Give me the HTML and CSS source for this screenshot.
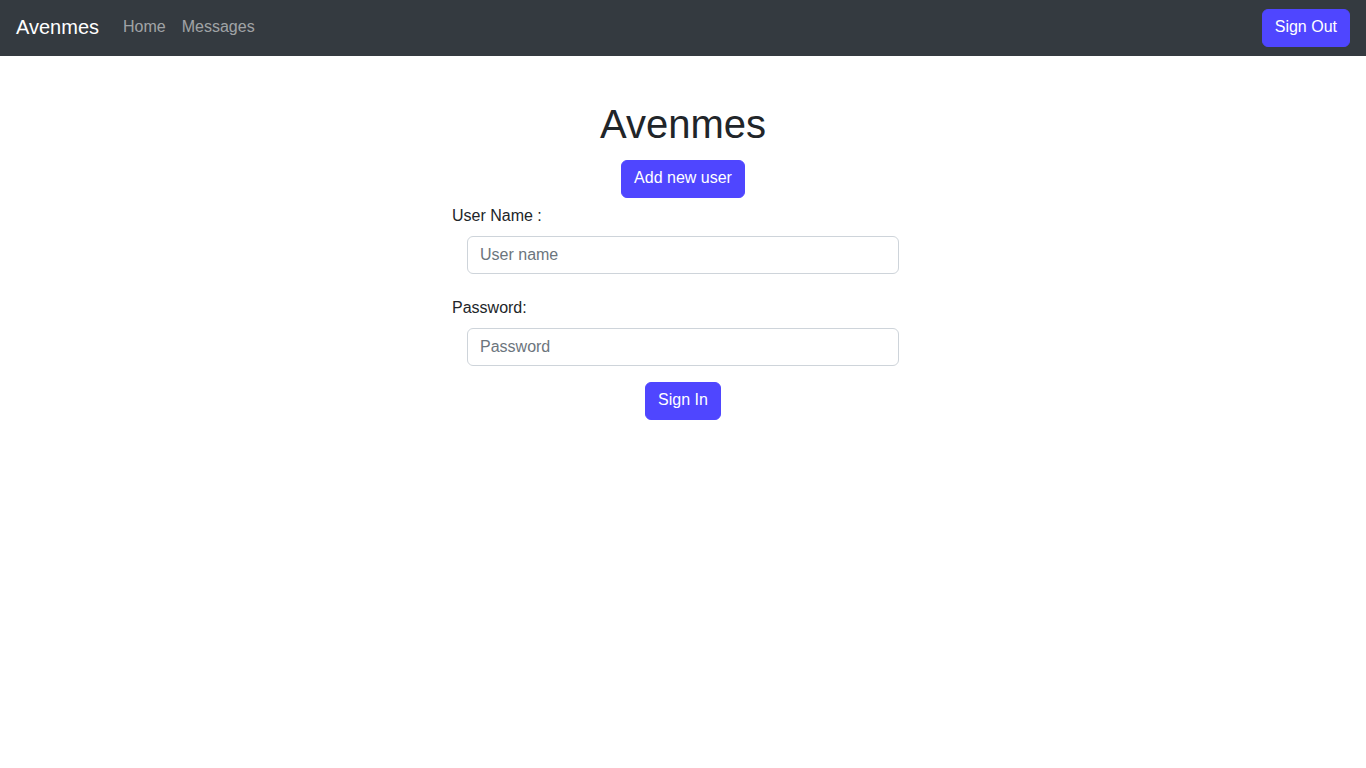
FILE: index.html
```html
<!DOCTYPE html>
<html lang="en">
<head>
<meta charset="utf-8">
<title>Avenmes</title>
<link rel="stylesheet" href="styles.css">
</head>
<body>
<nav class="navbar">
  <div class="nav-left">
    <a class="brand" href="#">Avenmes</a>
    <a class="nav-link" href="#">Home</a>
    <a class="nav-link" href="#">Messages</a>
  </div>
  <button class="btn">Sign Out</button>
</nav>
<main class="main">
  <h1 class="title">Avenmes</h1>
  <button class="btn">Add new user</button>
  <form class="form">
    <label class="label">User Name :</label>
    <input class="input" type="text" placeholder="User name">
    <label class="label label-second">Password:</label>
    <input class="input" type="password" placeholder="Password">
    <div class="actions"><button class="btn" type="button">Sign In</button></div>
  </form>
</main>
</body>
</html>
```
FILE: styles.css
```css
* { box-sizing: border-box; }
body {
  margin: 0;
  font-family: "Liberation Sans", Arial, sans-serif;
  font-size: 16px;
  line-height: 24px;
  color: #212529;
  background: #fff;
}
.navbar {
  height: 56px;
  background: #343a40;
  display: flex;
  align-items: center;
  justify-content: space-between;
  padding: 0 16px;
}
.nav-left { display: flex; align-items: center; padding-bottom: 2px; }
.brand {
  color: #fff;
  font-size: 20px;
  line-height: 30px;
  text-decoration: none;
  margin-right: 16px;
}
.nav-link {
  color: rgba(255,255,255,0.55);
  text-decoration: none;
  padding: 8px;
}
.btn {
  font-family: inherit;
  font-size: 16px;
  line-height: 24px;
  height: 38px;
  padding: 5px 12px 7px;
  border: 1px solid #4f46ff;
  background: #4f46ff;
  color: #fff;
  border-radius: 6px;
  cursor: pointer;
}
.main {
  display: flex;
  flex-direction: column;
  align-items: center;
  padding-top: 44px;
}
.title {
  font-size: 40px;
  line-height: 48px;
  font-weight: 400;
  margin: 0 0 12px;
}
.form {
  width: 462px;
  display: flex;
  flex-direction: column;
}
.label {
  display: block;
  margin-top: 6px;
  margin-bottom: 8px;
}
.label-second { margin-top: 22px; margin-bottom: 8px; }
.input {
  margin-left: 15px;
  width: 432px;
  height: 38px;
  padding: 6px 12px;
  font-family: inherit;
  font-size: 16px;
  line-height: 24px;
  color: #212529;
  border: 1px solid #ced4da;
  border-radius: 6px;
  outline: none;
}
.input::placeholder { color: #6c757d; }
.actions {
  display: flex;
  justify-content: center;
  margin-top: 16px;
}
```
